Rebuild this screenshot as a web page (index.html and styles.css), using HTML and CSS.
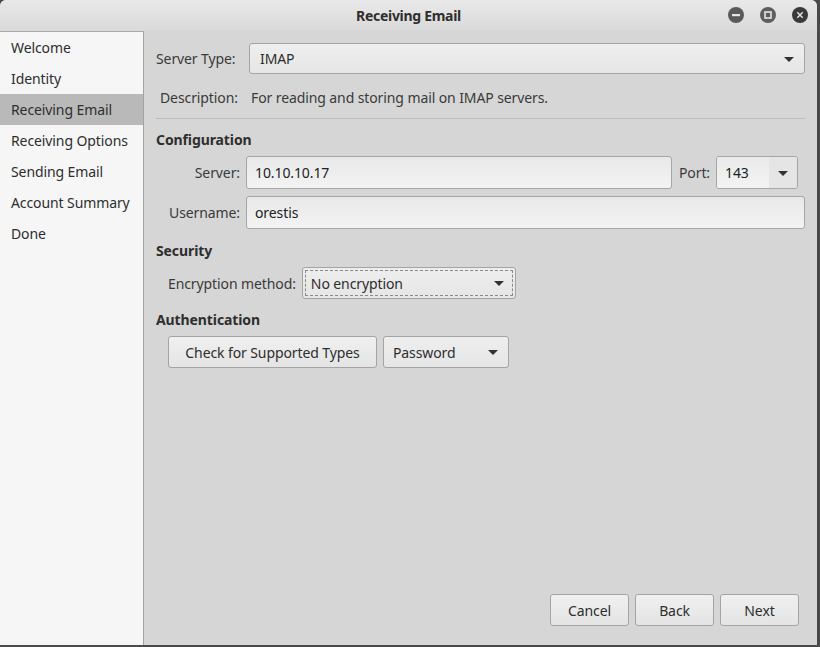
FILE: index.html
```html
<!DOCTYPE html>
<html>
<head>
<meta charset="utf-8">
<link rel="stylesheet" href="styles.css">
</head>
<body>
<div class="window">
  <div class="titlebar">
    <div class="title">Receiving Email</div>
    <div class="controls">
      <svg class="ctl" width="16" height="16" viewBox="0 0 16 16"><circle cx="8" cy="8" r="8" fill="#5a5a5a"/><rect x="4" y="7" width="8" height="2.2" fill="#e6e6e6"/></svg>
      <svg class="ctl" width="16" height="16" viewBox="0 0 16 16"><circle cx="8" cy="8" r="8" fill="#5e5e5e"/><rect x="5" y="5" width="6" height="6" fill="none" stroke="#e6e6e6" stroke-width="1.6"/></svg>
      <svg class="ctl" width="16" height="16" viewBox="0 0 16 16"><circle cx="8" cy="8" r="8" fill="#3a3a3a"/><path d="M5.3 5.3 L10.7 10.7 M10.7 5.3 L5.3 10.7" stroke="#e6e6e6" stroke-width="1.4"/></svg>
    </div>
  </div>
  <div class="body">
    <ul class="sidebar">
      <li>Welcome</li>
      <li>Identity</li>
      <li class="sel">Receiving Email</li>
      <li>Receiving Options</li>
      <li>Sending Email</li>
      <li>Account Summary</li>
      <li>Done</li>
    </ul>
    <div class="main">
      <div class="row r-type">
        <span class="lbl">Server Type:</span>
        <div class="combo wide"><span>IMAP</span><i class="arrow"></i></div>
      </div>
      <div class="row r-desc">
        <span class="lbl desc-lbl">Description:</span>
        <span class="desc">For reading and storing mail on IMAP servers.</span>
      </div>
      <div class="sep"></div>
      <div class="heading h-config">Configuration</div>
      <div class="grid">
        <span class="lbl right">Server:</span>
        <div class="server-line">
          <div class="entry grow">10.10.10.17</div>
          <span class="lbl port-lbl">Port:</span>
          <div class="portcombo"><span class="pv">143</span><span class="pbtn"><i class="arrow"></i></span></div>
        </div>
        <span class="lbl right">Username:</span>
        <div class="entry">orestis</div>
      </div>
      <div class="heading h-sec">Security</div>
      <div class="row indent r-enc">
        <span class="lbl">Encryption method:</span>
        <div class="combo enc"><div class="focus"><span>No encryption</span><i class="arrow"></i></div></div>
      </div>
      <div class="heading h-auth">Authentication</div>
      <div class="row indent r-auth">
        <button class="btn check">Check for Supported Types</button>
        <div class="combo pw"><span>Password</span><i class="arrow"></i></div>
      </div>
      <div class="spacer"></div>
      <div class="actions">
        <button class="btn act">Cancel</button>
        <button class="btn act">Back</button>
        <button class="btn act">Next</button>
      </div>
    </div>
  </div>
</div>
</body>
</html>
```

FILE: styles.css
```css
* { box-sizing: border-box; }
html, body { margin: 0; padding: 0; }
body {
  width: 820px;
  height: 647px;
  background: #4a4a4a;
  font-family: "Noto Sans", "DejaVu Sans", sans-serif;
  font-size: 14px;
  letter-spacing: -0.1px;
  color: #2e3436;
  overflow: hidden;
}
.window {
  width: 817px;
  height: 645px;
  background: #d6d6d6;
  border-radius: 6px 6px 0 0;
  display: flex;
  flex-direction: column;
  overflow: hidden;
}
.titlebar {
  height: 31px;
  flex: none;
  background: linear-gradient(#e9e9e9, #d9d9d9);
  position: relative;
  display: flex;
  align-items: center;
  justify-content: center;
}
.title {
  font-weight: bold;
  font-size: 14px;
  color: #2e2e2e;
  letter-spacing: -0.3px;
  margin-top: -1px;
}
.controls {
  position: absolute;
  right: 9px;
  top: 7px;
  display: flex;
  gap: 16px;
}
.ctl { display: block; }
.body {
  flex: 1;
  display: flex;
  min-height: 0;
}
.sidebar {
  list-style: none;
  margin: 0;
  padding: 0;
  width: 144px;
  flex: none;
  background: #f6f6f6;
  border-top: 1px solid #a9a9a9;
  border-right: 1px solid #a3a3a3;
  color: #2e2e2e;
}
.sidebar li {
  height: 31px;
  line-height: 31px;
  padding-left: 11px;
  white-space: nowrap;
}
.sidebar li.sel { background: #b9b9b9; }
.main {
  flex: 1;
  display: flex;
  flex-direction: column;
  padding: 12px 12px 19px 12px;
  min-width: 0;
}
.row { display: flex; align-items: center; }
.lbl { color: #3a3a3a; white-space: nowrap; }
.r-type { gap: 10px; height: 31px; }
.r-type .lbl { width: 83px; }
.r-type .combo { height: 31px; }
.combo {
  height: 32px;
  border: 1px solid #a4a4a4;
  border-radius: 3px;
  background: linear-gradient(#eeeeee, #e6e6e6);
  display: flex;
  align-items: center;
  justify-content: space-between;
  padding: 0 10px 0 10px;
  color: #2e2e2e;
}
.combo.wide { flex: 1; }
.arrow {
  display: inline-block;
  width: 0; height: 0;
  border-left: 5px solid transparent;
  border-right: 5px solid transparent;
  border-top: 5px solid #333;
  margin-top: 1px;
}
.r-desc { margin-top: 13px; height: 20px; }
.desc-lbl { margin-left: 4px; width: 91px; }
.desc { color: #3a3a3a; }
.sep { height: 1px; background: #bdbdbd; margin-top: 11px; }
.heading { font-weight: bold; color: #2e2e2e; height: 20px; line-height: 20px; }
.h-config { margin-top: 11px; }
.grid {
  margin-top: 6px;
  margin-left: 12px;
  display: grid;
  grid-template-columns: 72px 1fr;
  column-gap: 6px;
  row-gap: 7px;
  align-items: center;
}
.right { text-align: right; }
.server-line { display: flex; align-items: center; }
.entry {
  height: 33px;
  border: 1px solid #a6a6a6;
  border-radius: 3px;
  background: linear-gradient(#e8e8e8, #f3f3f3);
  display: flex;
  align-items: center;
  padding-left: 8px;
  color: #222;
}
.grow { flex: 1; }
.port-lbl { margin-left: 7px; margin-right: 6px; }
.portcombo {
  width: 82px;
  height: 33px;
  border: 1px solid #a6a6a6;
  border-radius: 3px;
  display: flex;
  overflow: hidden;
  margin-right: 7px;
}
.pv {
  flex: 1;
  background: linear-gradient(#eaeaea, #f3f3f3);
  display: flex;
  align-items: center;
  padding-left: 8px;
  color: #222;
}
.pbtn {
  width: 28px;
  background: #e5e5e5;
  display: flex;
  align-items: center;
  justify-content: center;
}
.h-sec { margin-top: 12px; }
.indent { margin-left: 12px; }
.r-enc { margin-top: 6px; gap: 6px; }
.combo.enc { width: 214px; padding: 2px; }
.focus {
  flex: 1;
  height: 100%;
  border: 1px dashed #8a8a8a;
  display: flex;
  align-items: center;
  justify-content: space-between;
  padding: 0 8px 0 5px;
}
.h-auth { margin-top: 11px; }
.r-auth { margin-top: 6px; gap: 6px; }
.btn {
  font-family: inherit;
  font-size: 14px;
  letter-spacing: -0.1px;
  color: #2e2e2e;
  height: 32px;
  border: 1px solid #a4a4a4;
  border-radius: 3px;
  background: linear-gradient(#f0f0f0, #e4e4e4);
  padding: 0;
  margin: 0;
}
.check { width: 209px; }
.combo.pw { width: 126px; padding: 0 10px 0 9px; }
.spacer { flex: 1; }
.actions {
  display: flex;
  justify-content: flex-end;
  gap: 6px;
  margin-right: 6px;
}
.act { width: 79px; }
```
